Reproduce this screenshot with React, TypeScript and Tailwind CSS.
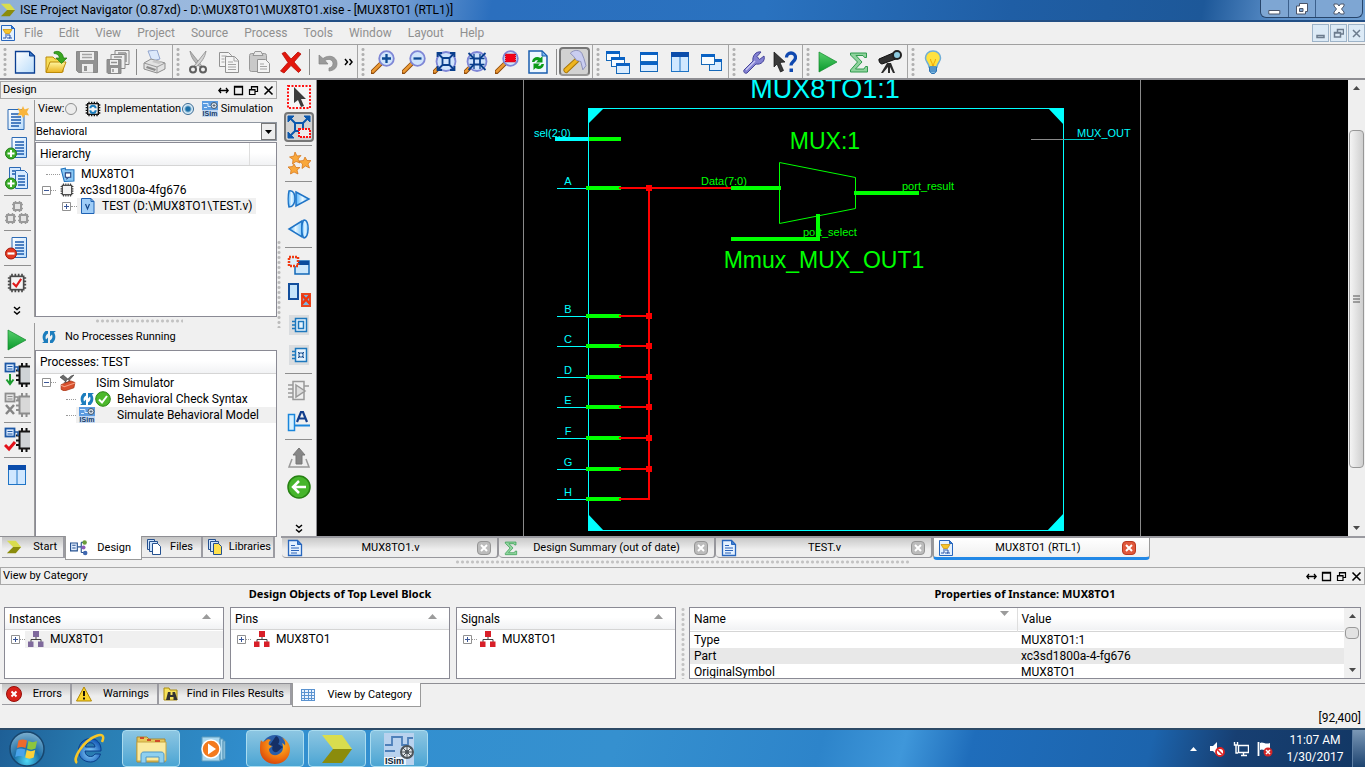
import { useState, type ReactNode } from "react";

const UI = "font-['Roboto','Liberation_Sans',sans-serif]";

/* ---------- drawing helpers ---------- */

function Svg({ s = 24, w, h, vb, children }: { s?: number; w?: number; h?: number; vb?: string; children: ReactNode }) {
  return (
    <svg width={w ?? s} height={h ?? s} viewBox={vb ?? "0 0 24 24"} fill="none" aria-hidden="true" className="block shrink-0">
      {children}
    </svg>
  );
}

function Defs() {
  return (
    <svg width="0" height="0" className="absolute" aria-hidden="true">
      <defs>
        <linearGradient id="gPage" x1="0" y1="0" x2="1" y2="1">
          <stop offset="0" stopColor="#ffffff" />
          <stop offset="1" stopColor="#b9dcfb" />
        </linearGradient>
        <linearGradient id="gGreen" x1="0" y1="0" x2="0" y2="1">
          <stop offset="0" stopColor="#57cf6c" />
          <stop offset="1" stopColor="#0a9a2c" />
        </linearGradient>
        <linearGradient id="gBlue" x1="0" y1="0" x2="1" y2="0">
          <stop offset="0" stopColor="#4fb4ff" />
          <stop offset="0.5" stopColor="#e8f7ff" />
          <stop offset="1" stopColor="#7cc8ff" />
        </linearGradient>
        <linearGradient id="gFolder" x1="0" y1="0" x2="0" y2="1">
          <stop offset="0" stopColor="#fff6a0" />
          <stop offset="1" stopColor="#eab320" />
        </linearGradient>
        <radialGradient id="gOrb" cx="0.5" cy="0.85" r="0.85">
          <stop offset="0" stopColor="#4fd8f4" />
          <stop offset="0.45" stopColor="#1b6fa8" />
          <stop offset="1" stopColor="#7fb0cf" />
        </radialGradient>
        <radialGradient id="gIe" cx="0.5" cy="0.6" r="0.6">
          <stop offset="0" stopColor="#8fd8ff" />
          <stop offset="1" stopColor="#0f55b4" />
        </radialGradient>
        <radialGradient id="gFox" cx="0.6" cy="0.3" r="0.8">
          <stop offset="0" stopColor="#ffc629" />
          <stop offset="0.6" stopColor="#f0720f" />
          <stop offset="1" stopColor="#cf3a0a" />
        </radialGradient>
      </defs>
    </svg>
  );
}

const Chevron = ({ s = 18 }: { s?: number }) => (
  <Svg s={s} vb="0 0 18 18">
    <path d="M1 2h10l6 7H8z" fill="#d9dd4e" />
    <path d="M8 9h9l-6 7H1z" fill="#8b8c0c" />
  </Svg>
);

const NewFile = () => (
  <Svg>
    <path d="M2.500 1.500h14L21.500 6v17h-19z" fill="url(#gPage)" stroke="#0b3f92" strokeWidth="1.300" />
    <path d="M16.500 1.500V6h5z" fill="#3a79c8" stroke="#0b3f92" />
  </Svg>
);

const OpenFolder = () => (
  <Svg>
    <path d="M2 7h7l2 2h8v13H2z" fill="#f6dc56" stroke="#bb8a0a" />
    <path d="M2 22.500 6 12h16l-4 10.500z" fill="url(#gFolder)" stroke="#bb8a0a" />
    <path d="M10 2c5-2 9 1 9.500 6H23l-5.500 5.500L12 8h3.500C15 5 13 3.500 10 3.500z" fill="#3aa621" stroke="#1f7a0e" strokeWidth=".7" />
  </Svg>
);

const Save = () => (
  <Svg>
    <path d="M1.500 1.500h21v21h-19l-2-2z" fill="#929292" stroke="#888" />
    <path d="M5 2h14v8H5z" fill="#f0f0f0" />
    <path d="M7 4.500h10M7 7.500h10" stroke="#a5a5a5" strokeWidth="1.500" />
    <path d="M7 14h11v8.500H7z" fill="#ededed" />
    <path d="M9 16h3v5H9z" fill="#929292" />
  </Svg>
);

const SaveAll = () => (
  <Svg>
    <g stroke="#888">
      <path d="M9 .5h14v14H9z" fill="#eee" />
      <path d="M5 4.500h14v14H5z" fill="#eee" />
      <path d="M1 9.500h14v14H2l-1-1z" fill="#929292" />
    </g>
    <path d="M4 10h8v5H4zM5 18h7v5H5z" fill="#efefef" />
    <path d="M5 12.500h6M7 19v3M12 3h8M20 3v9M8 7h8" stroke="#929292" strokeWidth="1.500" />
  </Svg>
);

const Printer = () => (
  <Svg>
    <path d="m5 1 9-1 3 9-8 2z" fill="#dbe8fb" stroke="#7f95c4" strokeWidth=".8" />
    <path d="M1 13 8 9l14 4v6l-8 4L1 19z" fill="#e2e2e2" stroke="#8d8d8d" />
    <path d="m1 13 13 4 8-4M14 17v6" stroke="#999" />
    <path d="m3 18 9 3 1-2-9-3z" fill="#8c8c8c" />
    <path d="m9 12 7 2 4-2-8-2z" fill="#c6c6c6" />
  </Svg>
);

const Cut = () => (
  <Svg>
    <path d="M4 1c1 6 4 11 10 16l1.500-1.500z" fill="#b9b9b9" stroke="#8a8a8a" strokeWidth=".8" />
    <path d="M20 1c-1 6-4 11-10 16l-1.500-1.500z" fill="#d5d5d5" stroke="#8a8a8a" strokeWidth=".8" />
    <circle cx="7" cy="19.500" r="3" stroke="#5f5f5f" strokeWidth="2" />
    <circle cx="17" cy="19.500" r="3" stroke="#5f5f5f" strokeWidth="2" />
  </Svg>
);

const Copy = () => (
  <Svg>
    <path d="M2.500 2.500h9l3 3v11h-12z" fill="#f4f4f4" stroke="#929292" />
    <path d="M8.500 6.500h9l4 4v12h-13z" fill="#f4f4f4" stroke="#929292" />
    <path d="M17 7v4h4M11 12h5M11 14.500h8M11 17h8M11 19.500h8M4.500 6h5M4.500 9h3M4.500 12h3" stroke="#a4a4a4" />
  </Svg>
);

const Paste = () => (
  <Svg>
    <rect x="1.500" y="3.500" width="17" height="18" rx="2" fill="#c9c9c9" stroke="#999" />
    <path d="M5 5.500 7 1.500h6l2 4z" fill="#e9e9e9" stroke="#999" />
    <path d="M9.500 9.500h8l4 4v9h-12z" fill="#f4f4f4" stroke="#929292" />
    <path d="M12 14h4M12 16.500h7M12 19h7" stroke="#a4a4a4" />
  </Svg>
);

const DeleteX = () => (
  <Svg>
    <path d="M3 3.500 6 2l6 7 7-7 3 2-7 8 7 8-2.500 2.500-7.500-7-7 7.500-3.500-2L9 12.500z" fill="#e3170d" stroke="#b80c05" strokeWidth=".8" />
  </Svg>
);

const Undo = () => (
  <Svg>
    <path d="M3 5v9h9l-3-3.500c4-2.500 8-.5 8 3 0 2.500-1.500 4-4 4.500v3c5-.5 8-3 8-7.500 0-7-8-9.500-14-5z" fill="#9a9a9a" stroke="#858585" strokeWidth=".7" />
  </Svg>
);

function Lens({ kind }: { kind: "in" | "out" | "fit" | "full" | "area" }) {
  const wide = kind === "fit" || kind === "full";
  return (
    <Svg>
      <path d="m1.500 22 8-8" stroke="#8f4a0a" strokeWidth="4.500" strokeLinecap="round" />
      <path d="m1.800 21.500 7.500-7.500" stroke="#eb9a35" strokeWidth="2.500" strokeLinecap="round" />
      {wide ? <circle cx="13" cy="11.500" r="9.500" fill="#cfe3fb" stroke="#7e86d6" strokeWidth="1.800" /> : <circle cx="15.500" cy="8.500" r="7.300" fill="#cfe3fb" stroke="#7e86d6" strokeWidth="1.800" />}
      {kind === "in" && <path d="M15.500 4v9M11 8.500h9" stroke="#0d4a94" strokeWidth="2.300" />}
      {kind === "out" && <path d="M11.500 8.500h8" stroke="#0d4a94" strokeWidth="2.300" />}
      {kind === "area" && <path d="M10.500 4h10v8h-10z" fill="#f40018" stroke="#c70010" strokeDasharray="1 1" />}
      {kind === "fit" && (
        <g stroke="#0a3f8c" strokeWidth="1.800">
          <path d="M9.500 8h7v7h-7zM9.500 8 5 3.500M16.500 8 21 3.500M9.500 15 5 19.500M16.500 15l4.500 4.500" />
          <path d="M4.500 7V3H9M17 3h4.500v4M4.500 16v4H9M17 20h4.500v-4" />
        </g>
      )}
      {kind === "full" && (
        <g stroke="#0a3f8c" strokeWidth="1.800">
          <path d="M10 8.500h6v6h-6zM4.500 3l5 5M21.500 3l-5 5M4.500 20l5-5M21.500 20l-5-5" />
          <path d="M10 4v4.500H5.500M16 4v4.500h4.500M10 19v-4.500H5.500M16 19v-4.500h4.500" strokeWidth="1.300" />
        </g>
      )}
    </Svg>
  );
}

const RefreshPage = () => (
  <Svg>
    <path d="M3 1h13l5 5v17H3z" fill="#eef7ff" stroke="#1a5eae" strokeWidth="1.500" />
    <path d="M16 1v5h5z" fill="#76b5f0" stroke="#1a5eae" />
    <path d="M6 12c.5-5 5.500-6 8.500-4L16.500 6v6.500H10L12 10.500c-1.500-.8-3-.3-3.500 1.500zM18 14c-.5 5-5.500 6-8.500 4L7.500 20v-6.500H14L12 15.500c1.500.8 3 .3 3.500-1.500z" fill="#0b9b18" />
  </Svg>
);

const Hammer = () => (
  <Svg s={25}>
    <path d="m2 19 11-10 3 3L5 22.500c-2 1-4-1.500-3-3.500z" fill="#eeb51f" stroke="#a87709" />
    <path d="M8 4c4-4 9-3 11 0l2 5 2 7-3 4-2-8-4-1-3-4z" fill="#c9cdf0" stroke="#8286b3" strokeWidth=".8" />
  </Svg>
);

function Win({ x, y, w, h, light }: { x: number; y: number; w: number; h: number; light?: boolean }) {
  return (
    <g>
      <rect x={x + 0.5} y={y + 0.5} width={w - 1} height={h - 1} fill={light ? "#d9ecff" : "#f8fcff"} stroke="#1668b8" />
      <rect x={x} y={y} width={w} height="3" fill="#0a62c4" />
    </g>
  );
}
const Cascade = () => (
  <Svg>
    <Win x={0} y={1} w={14} h={10} />
    <Win x={5} y={7} w={14} h={10} />
    <Win x={10} y={13} w={14} h={11} light />
  </Svg>
);
const TileH = () => (
  <Svg>
    <Win x={3} y={2} w={18} h={10} />
    <Win x={3} y={12} w={18} h={10} light />
  </Svg>
);
const TileV = ({ s = 24 }: { s?: number }) => (
  <Svg s={s}>
    <rect x="3.500" y="2.500" width="17" height="19" fill="#cfe7ff" stroke="#1f74c6" />
    <path d="M3 2h18v5H3z" fill="#0a4cab" />
    <path d="M12 7v15" stroke="#1f74c6" />
  </Svg>
);
const Layers = () => (
  <Svg>
    <Win x={10} y={9} w={13} h={12} light />
    <Win x={2} y={4} w={14} h={11} />
  </Svg>
);
const Wrench = () => (
  <Svg>
    <path d="M2 20 11 11c-1-5 3-10 8-9l-4 4.500 2.500 3L22 6c1.500 5-3 9-8 8l-9 9c-2 1-4-1-3-3z" fill="#8482d2" stroke="#45449a" />
    <path d="m4 20 9-9" stroke="#c9c8f3" strokeWidth="1.500" />
  </Svg>
);
const HelpArrow = () => (
  <Svg>
    <path d="m1 2 11 10-5 .5 3.500 8-3 1.500L4 14l-3 3z" fill="#3a3a3a" stroke="#111" strokeWidth=".7" />
    <path d="M13.500 7.500c0-6 9-6 9 0 0 4-4.500 4-4.500 8" stroke="#1049b0" strokeWidth="3.300" />
    <path d="M16.500 18.500h3.500V22h-3.500z" fill="#1049b0" />
  </Svg>
);
const Play = () => (
  <Svg>
    <path d="m3 2 18 10L3 22z" fill="url(#gGreen)" stroke="#138a2c" strokeWidth=".7" />
  </Svg>
);
const Sigma = ({ s = 24 }: { s?: number }) => (
  <Svg s={s}>
    <path d="M3.500 3h16v4.500h-2L16 5.500H9l6 6.500-6.500 7H17l1.500-2.500h2V22H3.500v-2l7-8-7-7z" fill="#8fd39d" stroke="#2f9a4c" />
  </Svg>
);
const Telescope = () => (
  <Svg>
    <path d="m1 9 14-6 3 6-14 5c-2 0-3.500-3-3-5z" fill="#303030" stroke="#111" />
    <circle cx="19" cy="5" r="4" fill="#8ecbe0" stroke="#222" strokeWidth="2" />
    <path d="M9 13h4l4 10h-2l-3-6v6h-2v-6l-5 6H3z" fill="#2b2b2b" />
  </Svg>
);
const Bulb = () => (
  <Svg>
    <path d="M12 1c5 0 7.500 3.500 7.500 7 0 4-3.500 5-3.500 9H8c0-4-3.500-5-3.500-9C4.500 4.500 7 1 12 1z" fill="#ffe23f" stroke="#6eaed8" strokeWidth="1.500" />
    <path d="M9.500 9c0 3 2 3 2 7M14.500 9c0 3-2 3-2 7" stroke="#f2a400" />
    <path d="M8.500 17h7v4l-2 2.500h-3l-2-2.500z" fill="#7fb9e0" stroke="#2b73b5" />
    <path d="M8.500 19h7M8.500 21h7" stroke="#2b73b5" />
  </Svg>
);

/* source file page with optional badge */
function Doc({ s = 24, badge }: { s?: number; badge?: "add" | "del" | "star" | "dup" }) {
  return (
    <Svg s={s}>
      {badge === "dup" && (
        <g>
          <path d="M4.500 1.500h11v16h-11z" fill="#d6eaff" stroke="#2c6ab4" />
          <path d="M10.500 4.500h9l3 3v15h-12z" fill="#d6eaff" stroke="#2c6ab4" />
          <path d="M13 10h7M13 13h7M13 16h7M13 19h7M7 5h3M7 8h3" stroke="#1d5cae" strokeWidth="1.500" />
        </g>
      )}
      {badge !== "dup" && (
        <g>
          <path d={badge === "star" ? "M3 3.500h16v20H3z" : "M7 1.500h14.500v20H7z"} fill="url(#gPage)" stroke="#2c6ab4" />
          <path d={badge === "star" ? "M6 8h9M6 11h10M6 14h10M6 17h10M6 20h8" : "M10 6h9M10 9h9M10 12h9M10 15h9M10 18h9"} stroke="#1d5cae" strokeWidth="1.500" />
        </g>
      )}
      {badge === "star" && <path d="m18 0 1.500 3.500L24 2l-2 4 2 3.500-4-.5-2 3-1.500-3-4 .5 2-3.500-2-4 4 1.500z" fill="#f9b53b" />}
      {(badge === "add" || badge === "dup") && (
        <g>
          <circle cx="6" cy="17.500" r="5.500" fill="#3dae2b" stroke="#1e7b14" />
          <path d="M6 14v7M2.500 17.500h7" stroke="#fff" strokeWidth="2" />
        </g>
      )}
      {badge === "del" && (
        <g>
          <circle cx="6" cy="17.500" r="5.500" fill="#e23a22" stroke="#a3170c" />
          <path d="M2.500 17.500h7" stroke="#fff" strokeWidth="2.200" />
        </g>
      )}
    </Svg>
  );
}
const PageText = () => (
  <Svg s={18} vb="0 0 18 18">
    <path d="M2.500 1.500h9l4 4v11h-13z" fill="#e4f1ff" stroke="#2766bd" strokeWidth="1.300" />
    <path d="M11.500 1.500v4h4z" fill="#3f7fd3" stroke="#2766bd" />
    <path d="M5 6.500h4M5 9h8M5 11.500h8M5 14h6" stroke="#2a62b8" />
  </Svg>
);
const Schematic = ({ s = 16 }: { s?: number }) => (
  <Svg s={s} vb="0 0 16 16">
    <path d="M1.500.5h10l3 3v12h-13z" fill="#e4f1ff" stroke="#2766bd" />
    <path d="M11.500.5v3h3z" fill="#3f7fd3" stroke="#2766bd" />
    <path d="M3 4.500h9l-2.500 4h-4z" fill="#f7c52b" stroke="#c48900" strokeWidth=".7" />
    <path d="M3 13h3v-2M12 13h-3M5 10h5v3H7" stroke="#2a55a8" />
  </Svg>
);
function Chip({ s = 24, c = "#333", children }: { s?: number; c?: string; children?: ReactNode }) {
  return (
    <Svg s={s}>
      <path d="M1 6h22M1 10h22M1 14h22M1 18h22M6 1v22M10 1v22M14 1v22M18 1v22" stroke={c} strokeWidth="2" />
      <rect x="4" y="4" width="16" height="16" fill="#f4f4f4" stroke={c} strokeWidth="2" />
      {children}
    </Svg>
  );
}
const ChipTrio = () => (
  <Svg>
    {["8,1", "1,13", "14,13"].map((p) => {
      const [x, y] = p.split(",").map(Number);
      return (
        <g key={p} stroke="#9a9a9a">
          <path d={`M${x - 1} ${y + 2.500}h11M${x - 1} ${y + 6.500}h11M${x + 2.500} ${y - 1}v11M${x + 6.500} ${y - 1}v11`} strokeWidth="1.500" />
          <rect x={x + 1} y={y + 1} width="7" height="7" fill="#e4e4e4" strokeWidth="2" />
        </g>
      );
    })}
  </Svg>
);
function Synth({ mark }: { mark: "down" | "x" | "check" }) {
  const grey = mark === "x";
  return (
    <Svg s={26} vb="0 0 26 26">
      <path d="M15.500 4.500H27v17H15.500zM12 8.500h4M12 13.500h4M12 18h4M18 1v4M22.500 1v4M18 21v4M22.500 21v4" fill={grey ? "#d8d8d8" : "#cfd3d6"} stroke={grey ? "#8d8d8d" : "#151515"} strokeWidth="2" />
      <path d="M11 5h3v4" stroke={grey ? "#8d8d8d" : "#1c57a5"} strokeWidth="1.500" />
      <rect x="1.500" y="1.500" width="9" height="8" fill={grey ? "#e4e4e4" : "#d9eaff"} stroke={grey ? "#8d8d8d" : "#1c57a5"} strokeWidth="1.800" />
      <path d="M3.500 4.500h5M3.500 7h5" stroke={grey ? "#8d8d8d" : "#1c57a5"} />
      {mark === "down" && <path d="M6 12v9M2.500 17.500 6 22l3.500-4.500" stroke="#1b9b2e" strokeWidth="2" />}
      {mark === "x" && <path d="m2 13 8 9M10 13l-8 9" stroke="#858585" strokeWidth="2.500" />}
      {mark === "check" && <path d="m1 18 4 4 6-7" stroke="#e3121a" strokeWidth="3" />}
    </Svg>
  );
}
const Cycle = ({ s = 16 }: { s?: number }) => (
  <Svg s={s} vb="0 0 16 16">
    <path d="M7 2H4.500C1 5 1 9.500 3 12.500L1 14h6V8.500L5 10.500C4 8.500 4.500 6 7 4.500zM9 14h2.500c3.500-3 3.500-7.500 1.500-10.500L15 2H9v5.500l2-2c1 2 .5 4.500-2 6z" fill="#1c7dbd" />
  </Svg>
);
const ISim = ({ s = 16 }: { s?: number }) => (
  <Svg s={s} vb="0 0 16 16">
    <rect width="16" height="16" fill="#5b9be0" />
    <path d="M1 2.500h5v3h3M2 6.500h3" stroke="#d9ecff" />
    <circle cx="12" cy="4.500" r="3" fill="#dfe6ee" stroke="#43566b" />
    <path d="M12 3v3M10.500 4.500h3" stroke="#43566b" strokeWidth=".8" />
    <path d="M0 9h16v7H0z" fill="#c4d9f3" />
    <text x="8" y="15" fontSize="7" fontWeight="700" fontFamily="Liberation Sans, sans-serif" textAnchor="middle" fill="#173a66">ISim</text>
  </Svg>
);
const ToolBox = () => (
  <Svg s={17} vb="0 0 16 16">
    <path d="m1 3 3-2 9 8-1.500 2zM14 1l-3 1-6 6 1.500 1.500z" fill="#6c6c6c" stroke="#3c3c3c" strokeWidth=".6" />
    <path d="M2 10 11 6.500l4 1.500-1 5-9 3-3-1.500z" fill="#d9502d" stroke="#a3300f" strokeWidth=".7" />
    <path d="m2 10.500 3 1.500 10-3.500" stroke="#f4a184" />
  </Svg>
);
const OkBadge = () => (
  <Svg s={16} vb="0 0 16 16">
    <circle cx="8" cy="8" r="7.300" fill="#4cb82c" stroke="#2c8516" />
    <path d="m4 8.500 3 3 5-6.500" stroke="#fff" strokeWidth="2" />
  </Svg>
);
const ProjectIcon = () => (
  <Svg s={15} vb="0 0 14 14">
    <path d="m1 2 4-1v1.500h8v10.500l-9 .5z" fill="#8cc8f4" stroke="#2073bd" />
    <path d="M5 5.500h5v4H8L6.500 11V9.500H5z" fill="#fff" stroke="#24417f" />
  </Svg>
);
const VerilogIcon = () => (
  <Svg s={16} vb="0 0 16 16">
    <path d="M1.500.5H11l3 3v12H1.500z" fill="#9fcdf7" stroke="#1e62b4" />
    <path d="M11 .5v3h3" stroke="#1e62b4" />
    <path d="M5.500 6 7.500 11l2-5" stroke="#164789" strokeWidth="1.200" />
  </Svg>
);
function Blocks({ c }: { c: string }) {
  return (
    <Svg s={16} vb="0 0 16 16">
      <path d="M8 5v4M3 11V8.500h10V11" stroke="#444" />
      <path d="M5 0h6v6H5zM0 10.500h5.500V16H0zM10 10.500h5.500V16H10z" fill={c} />
    </Svg>
  );
}

/* ---------- generic controls ---------- */

function ToolButton({ label, pressed, children }: { label: string; pressed?: boolean; children: ReactNode }) {
  return (
    <button
      type="button"
      aria-label={label}
      title={label}
      className={`flex h-[29px] w-[31px] shrink-0 items-center justify-center ${pressed ? "rounded-sm border-2 border-[#777] border-b-[#999] bg-[#d2d2d2]" : ""}`}
    >
      {children}
    </button>
  );
}
const SepBox = () => (
  <span className="flex w-1.5 shrink-0 justify-center">
    <span className="h-[26px] w-px bg-[#8b8b8b]" />
  </span>
);
const HSep = () => <span className="my-[2px] h-px w-[27px] shrink-0 bg-[#8f8f8f]" />;

function Group({ children, last }: { children: ReactNode; last?: boolean }) {
  return (
    <div className={`flex h-full items-center ${last ? "" : "border-r border-[#a5a5a5] pr-0.5"}`}>
      <span className="mr-0.5 ml-[3px] h-[29px] w-1 shrink-0 bg-[radial-gradient(circle,#b0b0b0_1px,transparent_2px)] bg-[length:4px_5px]" />
      {children}
    </div>
  );
}
const DoubleChevron = ({ down }: { down?: boolean }) => (
  <Svg s={10} vb="0 0 10 10">
    <path d={down ? "m2 1 3 2.500L8 1M2 5.500 5 8l3-2.500" : "m1 2 2.500 3L1 8M5.500 2 8 5 5.500 8"} stroke="#000" strokeWidth="1.500" />
  </Svg>
);

function DockButtons() {
  const items: [string, ReactNode][] = [
    ["Slide", <path key="a" d="M1 5.500h9M3 3 .8 5.500 3 8M8 3l2.200 2.500L8 8" stroke="#000" strokeWidth="1.300" />],
    ["Maximize", <path key="b" d="M1.500 1.500h8v8h-8zM1 2h9" stroke="#000" strokeWidth="1.300" />],
    ["Float", <path key="c" d="M3.500 4V1.500h6v5H7M1.500 4.500h5.500v5H1.500zM3 2h6.500M1 5h6" stroke="#000" strokeWidth="1.200" />],
    ["Close", <path key="d" d="m1.500 1.500 8 8M9.500 1.500l-8 8" stroke="#000" strokeWidth="1.600" />],
  ];
  return (
    <div className="flex gap-1">
      {items.map(([label, d]) => (
        <button key={label} type="button" aria-label={label} className="flex h-4 w-[11px] items-center justify-center">
          <Svg s={11} vb="0 0 11 11">{d}</Svg>
        </button>
      ))}
    </div>
  );
}

function Expander({ open }: { open?: boolean }) {
  return (
    <button type="button" aria-label={open ? "Collapse" : "Expand"} className="block shrink-0">
      <Svg s={9} vb="0 0 9 9">
        <path d="M.5.500h8v8h-8z" fill="#fff" stroke="#919191" />
        <path d={open ? "M2 4.500h5" : "M2 4.500h5M4.500 2v5"} stroke="#3b5797" />
      </Svg>
    </button>
  );
}
const Dots = ({ className }: { className: string }) => <span className={`shrink-0 border-t border-dotted border-[#9a9a9a] ${className}`} />;

/* ---------- window chrome ---------- */

function TitleBar() {
  return (
    <header className="flex h-[22px] items-start justify-between border-b-2 border-[#234f85] bg-[linear-gradient(100deg,#8fb0d6_0%,#9dbbe0_18%,#7fa5d6_28%,#2b6fbe_36%,#2a72bf_56%,#1f5ea5_74%,#1d5899_88%,#5f92cb_94%,#6f9fd2_100%)]">
      <div className="flex h-full items-center gap-1">
        <Chevron s={16} />
        <h1 className="text-[12px] leading-5 text-black">ISE Project Navigator (O.87xd) - D:\MUX8TO1\MUX8TO1.xise - [MUX8TO1 (RTL1)]</h1>
      </div>
      <div className="mr-0.5 flex h-[18px] rounded-b-md border border-t-0 border-[#27456b] bg-[#7ea6d3]">
        <button type="button" aria-label="Minimize" className="flex w-7 items-center justify-center border-r border-[#3c608c]">
          <Svg w={13} h={14} vb="0 0 13 14"><path d="M.8 8.500h11v3.500H.8z" fill="#fff" stroke="#4a5468" /></Svg>
        </button>
        <button type="button" aria-label="Restore" className="flex w-[27px] items-center justify-center border-r border-[#3c608c]">
          <Svg s={14} vb="0 0 14 14"><path d="M4.500 1.500h8v8h-2v2.500h-9V4h3z" fill="#fff" stroke="#4a5468" /><path d="M4.500 6.500h3.500V9.500H4.500z" fill="#7ea6d3" stroke="#4a5468" /></Svg>
        </button>
        <button type="button" aria-label="Close" className="flex w-[46px] items-center justify-center">
          <Svg s={12} vb="0 0 12 12"><path d="M1 1h3.500L6 3l1.500-2H11v2L8.500 6 11 9v2H7.500L6 9l-1.500 2H1V9l2.500-3L1 3z" fill="#fff" stroke="#4a5468" /></Svg>
        </button>
      </div>
    </header>
  );
}

function MenuBar() {
  const menus = ["File", "Edit", "View", "Project", "Source", "Process", "Tools", "Window", "Layout", "Help"];
  const mdi: [string, string][] = [
    ["Minimize document", "M2 7.500h7v2H2z"],
    ["Restore document", "M4.500 4V1.500h6v4.500H8M1.500 4.500h6v4.500h-6zM2 5h5"],
    ["Close document", "m2 2 7 7M9 2 2 9"],
  ];
  return (
    <nav className="flex h-[23px] items-center border-b border-[#a0a0a0] text-[12px] text-[#8f8f8f]" aria-label="Main menu">
      <span className="flex w-4 justify-center"><Schematic s={16} /></span>
      <ul className="flex flex-1">
        {menus.map((m) => (
          <li key={m}>
            <button type="button" className="px-2">{m}</button>
          </li>
        ))}
      </ul>
      <div className="flex gap-px">
        {mdi.map(([label, d]) => (
          <button key={label} type="button" aria-label={label} className="flex h-[18px] w-[17px] items-center justify-center border border-[#9db3c8] bg-[#dceaf6]">
            <Svg s={11} vb="0 0 11 11"><path d={d} stroke="#6c7c8e" strokeWidth="1.500" /></Svg>
          </button>
        ))}
      </div>
    </nav>
  );
}

function MainToolbar() {
  return (
    <div role="toolbar" aria-label="Main toolbar" className="flex h-[35px] items-center border-b-2 border-[#8e8e93]">
      <Group>
        <ToolButton label="New"><NewFile /></ToolButton>
        <ToolButton label="Open"><OpenFolder /></ToolButton>
        <ToolButton label="Save"><Save /></ToolButton>
        <ToolButton label="Save All"><SaveAll /></ToolButton>
        <SepBox />
        <ToolButton label="Print"><Printer /></ToolButton>
      </Group>
      <Group>
        <ToolButton label="Cut"><Cut /></ToolButton>
        <ToolButton label="Copy"><Copy /></ToolButton>
        <ToolButton label="Paste"><Paste /></ToolButton>
        <ToolButton label="Delete"><DeleteX /></ToolButton>
        <SepBox />
        <ToolButton label="Undo"><Undo /></ToolButton>
        <button type="button" aria-label="More" className="flex w-3 justify-center"><DoubleChevron /></button>
      </Group>
      <Group>
        <ToolButton label="Zoom In"><Lens kind="in" /></ToolButton>
        <ToolButton label="Zoom Out"><Lens kind="out" /></ToolButton>
        <ToolButton label="Zoom Full"><Lens kind="fit" /></ToolButton>
        <ToolButton label="Zoom Fit"><Lens kind="full" /></ToolButton>
        <ToolButton label="Zoom Area"><Lens kind="area" /></ToolButton>
        <ToolButton label="Refresh"><RefreshPage /></ToolButton>
        <SepBox />
        <ToolButton label="Build" pressed><Hammer /></ToolButton>
      </Group>
      <Group>
        <ToolButton label="Cascade"><Cascade /></ToolButton>
        <ToolButton label="Tile Horizontally"><TileH /></ToolButton>
        <ToolButton label="Tile Vertically"><TileV /></ToolButton>
        <ToolButton label="Float"><Layers /></ToolButton>
      </Group>
      <Group>
        <ToolButton label="Preferences"><Wrench /></ToolButton>
        <ToolButton label="What is this"><HelpArrow /></ToolButton>
      </Group>
      <Group>
        <ToolButton label="Run"><Play /></ToolButton>
        <ToolButton label="Summary"><Sigma /></ToolButton>
        <ToolButton label="Analyze"><Telescope /></ToolButton>
      </Group>
      <Group last>
        <ToolButton label="Tips"><Bulb /></ToolButton>
      </Group>
    </div>
  );
}

/* ---------- left dock ---------- */

function SideButton({ label, children, pressed }: { label: string; children: ReactNode; pressed?: boolean }) {
  return (
    <button type="button" aria-label={label} title={label} className={`flex h-[30px] w-[30px] shrink-0 items-center justify-center ${pressed ? "rounded border-2 border-[#777] bg-[#d2d2d2]" : ""}`}>
      {children}
    </button>
  );
}

function Radio({ id, label, checked, onChange, icon }: { id: string; label: string; checked: boolean; onChange: () => void; icon: ReactNode }) {
  return (
    <div className="flex items-center">
      <input
        id={id}
        type="radio"
        name="view"
        checked={checked}
        onChange={onChange}
        className="mr-2 h-3 w-3 shrink-0 appearance-none rounded-full border border-[#8e8f8f] bg-[#ececec] checked:border-[#3c6c94] checked:bg-[radial-gradient(circle,#1c70a8_2px,#d8ecf8_4px)]"
      />
      {icon}
      <label htmlFor={id} className="ml-[3px]">{label}</label>
    </div>
  );
}

function DesignPanel() {
  const [view, setView] = useState("sim");
  return (
    <div className="flex flex-1 flex-col">
      <div className="mt-px flex h-[18px] items-center justify-between border border-[#a9a9a9] pr-0.5 pl-0.5">
        <h2>Design</h2>
        <DockButtons />
      </div>
      <div className="mt-px flex h-[217px]">
        <div role="toolbar" aria-label="Source actions" className="flex w-[35px] shrink-0 flex-col items-center border-r border-[#9b9b9b] pt-[3px]">
          <SideButton label="New Source"><Doc badge="star" /></SideButton>
          <SideButton label="Add Source"><Doc badge="add" /></SideButton>
          <SideButton label="Add Copy of Source"><Doc badge="dup" /></SideButton>
          <HSep />
          <SideButton label="Manual Compile Order"><ChipTrio /></SideButton>
          <HSep />
          <SideButton label="Remove Source"><Doc badge="del" /></SideButton>
          <HSep />
          <SideButton label="Design Goals">
            <Chip s={20} c="#4a4a4a"><path d="m7 12 4 4 6-9" stroke="#e01a1a" strokeWidth="2.500" /></Chip>
          </SideButton>
          <button type="button" aria-label="More" className="mt-2"><DoubleChevron down /></button>
        </div>
        <div className="flex min-w-0 flex-1 flex-col">
          <fieldset className="flex h-[22px] min-w-0 items-center justify-between pt-px pr-1 pl-[3px]">
            <span>View:</span>
            <Radio id="v-impl" label="Implementation" checked={view === "impl"} onChange={() => setView("impl")} icon={<Chip s={16} c="#111"><path d="M8 11a4 4 0 0 1 8 0M16 14a4 4 0 0 1-8 0" stroke="#1c7dbd" strokeWidth="3" /></Chip>} />
            <Radio id="v-sim" label="Simulation" checked={view === "sim"} onChange={() => setView("sim")} icon={<ISim />} />
          </fieldset>
          <div className="flex h-[19px] border border-[#8f96a0] bg-white">
            <select aria-label="Simulation stage" className="min-w-0 flex-1 appearance-none bg-white" defaultValue="Behavioral">
              <option>Behavioral</option>
              <option>Post-Route</option>
            </select>
            <span aria-hidden="true" className="flex w-[15px] items-center justify-center border border-[#777] bg-[#ededed]">
              <Svg w={7} h={4} vb="0 0 7 4"><path d="M0 0h7L3.500 4z" fill="#000" /></Svg>
            </span>
          </div>
          <div className="mt-px flex flex-1 flex-col border border-[#8a8a94] bg-white">
            <div className="flex h-[23px] border-b border-[#d5d5d5] bg-linear-to-b from-white from-45% to-[#f1f2f4] text-[12px]">
              <span className="flex-1 border-r border-[#dedede] pl-1 leading-[23px]">Hierarchy</span>
              <span className="w-[26px]" />
            </div>
            <ul role="tree" aria-label="Hierarchy" className="text-[12px] leading-4">
              <li role="treeitem" className="flex h-4 items-center pl-2.5">
                <Dots className="w-[14px]" />
                <ProjectIcon />
                <span className="ml-1.5">MUX8TO1</span>
              </li>
              <li role="treeitem" aria-expanded="true">
                <div className="flex h-4 items-center pl-1.5">
                  <Expander open />
                  <Dots className="mr-1 w-[5px]" />
                  <Chip s={14} c="#444" />
                  <span className="ml-1.5">xc3sd1800a-4fg676</span>
                </div>
                <ul role="group">
                  <li role="treeitem" className="flex h-4 items-center pl-[26px]">
                    <Expander />
                    <Dots className="w-1.5" />
                    <span className="flex h-4 items-center bg-[#f0f0f0] pr-1 pl-[3px]">
                      <VerilogIcon />
                      <span className="ml-1.5">TEST (D:\MUX8TO1\TEST.v)</span>
                    </span>
                  </li>
                </ul>
              </li>
            </ul>
          </div>
        </div>
      </div>
      <div className="flex h-[6px] justify-center">
        <span className="mt-0.5 h-1 w-[88px] bg-[radial-gradient(circle,#c2c2c2_1px,transparent_2px)] bg-[length:5px_4px]" />
      </div>
      <div className="flex flex-1">
        <div role="toolbar" aria-label="Process actions" className="flex w-[35px] shrink-0 flex-col items-center border-r border-[#9b9b9b] pt-0.5">
          <SideButton label="Run"><Play /></SideButton>
          <HSep />
          <SideButton label="Rerun"><Synth mark="down" /></SideButton>
          <SideButton label="Stop"><Synth mark="x" /></SideButton>
          <HSep />
          <SideButton label="Check"><Synth mark="check" /></SideButton>
          <HSep />
          <SideButton label="Columns"><TileV /></SideButton>
        </div>
        <div className="flex min-w-0 flex-1 flex-col">
          <p className="flex h-[27px] items-center gap-2 pl-1.5">
            <Cycle />
            No Processes Running
          </p>
          <div className="flex flex-1 flex-col border border-b-0 border-[#8a8a94] bg-white text-[12px]">
            <h3 className="h-[23px] border-b border-[#d5d5d5] bg-linear-to-b from-white from-45% to-[#f1f2f4] pl-1 leading-[23px]">Processes: TEST</h3>
            <ul role="tree" aria-label="Processes" className="leading-4">
              <li role="treeitem" aria-expanded="true">
                <div className="flex h-[17px] items-center pl-1.5">
                  <Expander open />
                  <Dots className="mr-[3px] w-[5px]" />
                  <ToolBox />
                  <span className="ml-5">ISim Simulator</span>
                </div>
                <ul role="group">
                  <li role="treeitem" className="flex h-4 items-center pl-[30px]">
                    <Dots className="mr-[3px] w-2.5" />
                    <Cycle />
                    <OkBadge />
                    <span className="ml-1.5">Behavioral Check Syntax</span>
                  </li>
                  <li role="treeitem" className="flex h-4 items-center pl-[30px]">
                    <Dots className="w-2.5" />
                    <span className="flex flex-1 items-center bg-[#f0f0f0] pl-[3px]">
                      <ISim />
                      <span className="ml-[22px]">Simulate Behavioral Model</span>
                    </span>
                  </li>
                </ul>
              </li>
            </ul>
          </div>
        </div>
      </div>
    </div>
  );
}

const FilesIcon = ({ c = "#cfe4fb", front = "#ffffff" }: { c?: string; front?: string }) => (
  <Svg s={16} vb="0 0 16 16">
    <g stroke="#24508f">
      <path d="M1.500.5h7v10h-7z" fill={c} />
      <path d="M3.500 2.500h8v10h-8z" fill={c} />
      <path d="M6.500 4.500h5l3 3v8h-8z" fill={front} />
    </g>
  </Svg>
);

type TabSpec = { label: string; icon: ReactNode; active?: boolean; width: string };

function TabStrip({ tabs, label }: { tabs: TabSpec[]; label: string }) {
  return (
    <div role="tablist" aria-label={label} className="flex h-6 items-start border-t border-[#8f8f94] pl-0.5">
      {tabs.map((t) => (
        <button
          key={t.label}
          type="button"
          role="tab"
          aria-selected={!!t.active}
          className={`flex items-center justify-between whitespace-nowrap pl-1 ${t.width} ${t.active ? "-mt-px h-6 border border-t-0 border-[#9a9a9a] bg-white" : "h-[21px] border-r-2 border-b border-[#9c9ca2] bg-linear-to-b from-[#c4c4c4] to-[#eeeeee] to-60%"}`}
        >
          {t.icon}
          <span>{t.label}</span>
        </button>
      ))}
    </div>
  );
}

/* ---------- schematic view ---------- */

function Pin({ y, name }: { y: number; name: string }) {
  return (
    <g>
      <path d={`M557 ${y + 0.5}h31`} stroke="#00ffff" />
      <path d={`M586 ${y}h35`} stroke="#00ff00" strokeWidth="4" />
      <path d={`M619 ${y}h31`} stroke="#ff0000" strokeWidth="2" />
      {name !== "H" && <rect x="646" y={y - 3} width="6" height="6" fill="#ff0000" />}
      <text x="568" y={y - 3} textAnchor="middle" fontSize="11" fill="#00ffff">{name}</text>
    </g>
  );
}

function SchematicCanvas() {
  const pins: [string, number][] = [["A", 188], ["B", 316], ["C", 346], ["D", 377], ["E", 407], ["F", 438], ["G", 469], ["H", 499]];
  return (
    <div className="flex min-w-0 flex-1 justify-center overflow-hidden border-l border-[#8e8e93] bg-black">
      <svg width="1031" height="456" viewBox="317 80 1031 456" className="shrink-0" role="img" aria-label="RTL schematic of MUX8TO1" fontFamily="Liberation Sans, Arial, sans-serif" fill="none">
        <path d="M523.500 80v457M1140.500 80v457" stroke="#8a8a8a" />
        <path d="M588.500 108.500h475v422h-475z" stroke="#00ffff" />
        <path d="M588 108h16l-16 16zM1048 108h16v17zM588 514v17h16zM1064 513v18h-17z" fill="#00ffff" />
        <text x="825" y="98" textAnchor="middle" fontSize="27" fill="#00ffff">MUX8TO1:1</text>
        <text x="534" y="137" fontSize="11" fill="#00ffff">sel(2:0)</text>
        <path d="M555 139h34" stroke="#00ffff" strokeWidth="4" />
        <path d="M589 139h32" stroke="#00ff00" strokeWidth="4" />
        <path d="M1031 139.500h33" stroke="#8a8a8a" />
        <path d="M1064 139.500h30" stroke="#00c8c8" />
        <text x="1077" y="137" fontSize="11" fill="#00ffff">MUX_OUT</text>
        <path d="M649 187v313" stroke="#ff0000" strokeWidth="2" />
        {pins.map(([n, y]) => (
          <Pin key={n} name={n} y={y} />
        ))}
        <path d="M650 188h83" stroke="#ff0000" strokeWidth="2" />
        <g stroke="#00ff00" strokeWidth="4">
          <path d="M731 188h50M854 193h65M731 239h89M818 214v27" />
        </g>
        <path d="m779.500 162.500 76 15v31l-76 15z" stroke="#00ff00" />
        <g fill="#00ff00">
          <text x="701" y="185" fontSize="11">Data(7:0)</text>
          <text x="902" y="190" fontSize="11">port_result</text>
          <text x="803" y="236" fontSize="11">port_select</text>
          <text x="825" y="149" textAnchor="middle" fontSize="23">MUX:1</text>
          <text x="824" y="268" textAnchor="middle" fontSize="23">Mmux_MUX_OUT1</text>
        </g>
      </svg>
    </div>
  );
}

const Arrow = ({ up }: { up?: boolean }) => (
  <Svg w={7} h={4} vb="0 0 7 4">
    <path d={up ? "M0 4h7L3.500 0z" : "M0 0h7L3.500 4z"} fill="#4a4a4a" />
  </Svg>
);

const ToolSep = () => <span className="mt-[3px] mb-[2px] h-px w-[27px] shrink-0 bg-[#8f8f8f]" />;

function RtlToolbar() {
  return (
    <div role="toolbar" aria-label="Schematic tools" className="flex w-[35px] shrink-0 flex-col items-center pt-0.5">
      <SideButton label="Select">
        <Svg s={26} vb="0 0 26 26">
          <path d="M2 2h22v22H2z" fill="#f6f6f6" stroke="#f11" strokeWidth="2" strokeDasharray="2 1.500" />
          <path d="m8 3 12 12h-5l3 7-3 1-3-7-4 3z" fill="#3b3b3b" />
        </Svg>
      </SideButton>
      <SideButton label="Area zoom" pressed>
        <Svg s={26} vb="0 0 26 26">
          <g stroke="#0c58ae" strokeWidth="2">
            <path d="M9 9h8v8H9zM9 9 3 3M17 9l6-6M9 17l-6 6" />
            <path d="M2 2h6L2 8zM18 2h6v6zM2 18v6h6z" fill="#0c58ae" strokeWidth="1" />
          </g>
          <path d="M13 15h11v8H13z" fill="#eee" stroke="#f11" strokeWidth="2" strokeDasharray="2 1" />
        </Svg>
      </SideButton>
      <ToolSep />
      <SideButton label="Favorites">
        <Svg>
          <g fill="#f9a83c" stroke="#d27013" strokeWidth=".7">
            <path d="m8 1 2 4 4-.5-3 3.500 2 4-4-1.500L5.500 13 6 8.500 2.500 6 7 5z" />
            <path d="m18 6 2 3.500h4L21 13l1.500 4-4-2-3.500 2.500.5-4.500L12 10l4.500-.5z" />
            <path d="m7 13 2 3.500h4L10 19l1 4-4-2-3.500 2 .5-4-3-3 4.500-.5z" />
          </g>
        </Svg>
      </SideButton>
      <ToolSep />
      <SideButton label="Forward cone">
        <Svg><path d="M2 4c5-1 6 4 6 8s-2 8-6 8c-1-4-1-12 0-16z" fill="url(#gBlue)" stroke="#1f74c6" strokeWidth="1.500" /><path d="m9 5 13 7-13 7z" fill="url(#gBlue)" stroke="#1f74c6" strokeWidth="1.500" /></Svg>
      </SideButton>
      <SideButton label="Backward cone">
        <Svg><path d="M15 4 2 12l13 8z" fill="url(#gBlue)" stroke="#1f74c6" strokeWidth="1.500" /><path d="M17 3c6 0 5 17 0 18-3-3-3-15 0-18z" fill="url(#gBlue)" stroke="#1f74c6" strokeWidth="1.500" /></Svg>
      </SideButton>
      <ToolSep />
      <SideButton label="Add to view">
        <Svg>
          <path d="M10 8h12v13H8v-9" fill="#cce7fb" stroke="#1268b8" strokeWidth="1.500" />
          <path d="M11 8h11v4H11z" fill="#0a4b9c" />
          <path d="M2 4h9v9H2z" fill="#dceefa" stroke="#f03a12" strokeWidth="2.500" strokeDasharray="2 1" />
        </Svg>
      </SideButton>
      <SideButton label="Remove from view">
        <Svg s={26} vb="0 0 26 26">
          <path d="M3 2h9v15H3z" fill="#c5e4fa" stroke="#124e9c" strokeWidth="2" />
          <path d="M16 12h8v12h-8z" fill="#7cb5e0" stroke="#e9471f" strokeWidth="2" />
          <path d="m16 13 8 9M24 13l-8 9" stroke="#f0350f" strokeWidth="2.500" />
        </Svg>
      </SideButton>
      {["Push into block", "Pop out of block"].map((l, i) => (
        <SideButton key={l} label={l}>
          <span className="bg-[#d9dcdf]">
            <Svg s={20} vb="0 0 20 20">
              <path d="M6.500 3.500h11v13h-11zM3 6.500h3.500M3 10h3.500M3 13.500h3.500" fill="#e6f3fd" stroke="#1c77bd" strokeWidth="1.500" />
              {i === 0 ? <path d="M9.500 6.500h5v7h-5z" stroke="#1c77bd" strokeWidth="1.500" /> : <path d="m9 7 2 2M15 7l-2 2M9 13l2-2M15 13l-2-2M10 8h4v4h-4z" stroke="#174f90" />}
            </Svg>
          </span>
        </SideButton>
      ))}
      <ToolSep />
      <SideButton label="Signal">
        <Svg><path d="M6 2.500h11v18H6zM1 6h5M1 10h5M1 14h5M1 18h5M17 7h5" stroke="#999" strokeWidth="1.500" /><path d="m9 6 9 6-9 6z" fill="#ddd" stroke="#999" strokeWidth="1.500" /></Svg>
      </SideButton>
      <SideButton label="Name">
        <Svg>
          <path d="M1.500 5.500h6v16h-6z" fill="#d7f0ff" stroke="#1a86dc" strokeWidth="1.500" />
          <path d="M8 16.500h15" stroke="#1a86dc" strokeWidth="2" />
          <path d="m10 13 4-10h2l4 10M12 9.500h6" stroke="#123e8c" strokeWidth="2.200" />
        </Svg>
      </SideButton>
      <ToolSep />
      <SideButton label="Up">
        <Svg><path d="m5 14-3 8h20l-3-8" fill="#eee" stroke="#999" strokeWidth="1.500" /><path d="m12 3 6 7h-3v9H9v-9H6z" fill="#868686" stroke="#777" /></Svg>
      </SideButton>
      <SideButton label="Back">
        <Svg><circle cx="12" cy="12" r="11" fill="#46b52b" stroke="#268112" strokeWidth="1.500" /><path d="M19 12H7M12 6l-6 6 6 6" stroke="#fff" strokeWidth="2.500" /></Svg>
      </SideButton>
      <button type="button" aria-label="More" className="mt-auto mb-0.5"><DoubleChevron down /></button>
    </div>
  );
}

function DocumentTabs() {
  const tabs = [
    { label: "MUX8TO1.v", icon: <PageText /> },
    { label: "Design Summary (out of date)", icon: <Sigma s={16} /> },
    { label: "TEST.v", icon: <PageText /> },
    { label: "MUX8TO1 (RTL1)", icon: <Schematic />, active: true },
  ];
  return (
    <div role="tablist" aria-label="Open documents" className="flex h-6 items-start border-t-2 border-[#9a9aa0] pl-px">
      {tabs.map((t) => (
        <div
          key={t.label}
          className={`flex w-[217px] items-center pr-1.5 pl-1 ${t.active ? "h-[22px] rounded-b border-x border-b-[3px] border-x-[#9a9a9a] border-b-[#2288e6] bg-linear-to-b from-white to-[#f0f0f0] pr-[13px]" : "h-5 rounded-b border-r-2 border-b border-[#97979c] bg-linear-to-b from-[#c9c9c9] to-[#eeeeee] to-60%"}`}
        >
          {t.icon}
          <button type="button" role="tab" aria-selected={!!t.active} className="flex-1">{t.label}</button>
          <button type="button" aria-label={`Close ${t.label}`} className={`flex h-[14px] w-[14px] items-center justify-center rounded-sm border ${t.active ? "border-[#b8371f] bg-[#e0583b]" : "border-[#959595] bg-[#bcbcbc]"}`}>
            <Svg s={8} vb="0 0 8 8"><path d="m1 1 6 6M7 1 1 7" stroke="#fff" strokeWidth="2" /></Svg>
          </button>
        </div>
      ))}
    </div>
  );
}

/* ---------- bottom dock ---------- */

function ObjectList({ title, color, selected }: { title: string; color: string; selected?: boolean }) {
  return (
    <section className="flex h-[72px] flex-1 flex-col border border-[#8a8a94] bg-white">
      <div className="flex h-[22px] items-start justify-between border-b border-[#d5d5d5] bg-linear-to-b from-white from-45% to-[#f1f2f4] pr-3 pl-1">
        <h3 className="leading-[23px]">{title}</h3>
        <span className="mt-1.5"><Svg w={9} h={5} vb="0 0 9 5"><path d="M0 5h9L4.500 0z" fill="#9b9b9b" /></Svg></span>
      </div>
      <div className="flex h-[18px] items-center pl-1.5">
        <Expander />
        <Dots className="w-[5px]" />
        <span className={`flex h-[17px] flex-1 items-center gap-[6px] pl-[3px] ${selected ? "bg-[#f0f0f0]" : ""}`}>
          <Blocks c={color} />
          MUX8TO1
        </span>
      </div>
    </section>
  );
}

const PANEL_TITLE = "h-[22px] text-center font-['Noto_Sans',sans-serif] text-[11px] font-bold leading-[18px]";

function CategoryPanel() {
  const rows = [
    ["Type", "MUX8TO1:1"],
    ["Part", "xc3sd1800a-4-fg676"],
    ["OriginalSymbol", "MUX8TO1"],
  ];
  return (
    <section>
      <div className="flex h-[18px] items-center justify-between border border-[#a9a9a9] pr-0.5 pl-0.5">
        <h2>View by Category</h2>
        <DockButtons />
      </div>
      <div className="flex px-1 text-[12px]">
        <div className="min-w-0 flex-1">
          <h3 className={PANEL_TITLE}>Design Objects of Top Level Block</h3>
          <div className="flex gap-1.5">
            <ObjectList title="Instances" color="#7f6a9c" selected />
            <ObjectList title="Pins" color="#d81f28" />
            <ObjectList title="Signals" color="#d81f28" />
          </div>
        </div>
        <div className="flex w-[13px] items-end justify-center">
          <span className="h-[72px] w-1 bg-[radial-gradient(circle,#c2c2c2_1px,transparent_2px)] bg-[length:4px_5px]" />
        </div>
        <div className="min-w-0 flex-1">
          <h3 className={PANEL_TITLE}>Properties of Instance: MUX8TO1</h3>
          <div className="flex h-[72px] overflow-hidden border border-[#8a8a94] bg-white">
            <table className="flex-1 table-fixed border-collapse self-start text-left">
              <thead>
                <tr className="h-[23px] border-b border-[#d5d5d5] bg-linear-to-b from-white from-45% to-[#f1f2f4]">
                  <th className="w-1/2 border-r border-[#dedede] px-1 font-normal">
                    <span className="flex items-start justify-between pr-1">
                      Name
                      <Svg w={9} h={5} vb="0 0 9 5"><path d="M0 0h9L4.500 5z" fill="#9b9b9b" /></Svg>
                    </span>
                  </th>
                  <th className="w-1/2 px-1 font-normal">Value</th>
                </tr>
              </thead>
              <tbody>
                {rows.map(([n, v], i) => (
                  <tr key={n} className={i === 1 ? "bg-[#e8e8e8]" : ""}>
                    <td className="h-4 px-1 leading-4">{n}</td>
                    <td className="h-4 px-1 leading-4">{v}</td>
                  </tr>
                ))}
              </tbody>
            </table>
            <div className="flex w-4 shrink-0 flex-col items-center justify-between bg-[#f0f0f0] py-1.5">
              <Arrow up />
              <span className="mb-5 h-3 w-3.5 rounded-sm border border-[#999] bg-[#e2e2e2]" />
              <Arrow />
            </div>
          </div>
        </div>
      </div>
    </section>
  );
}

/* ---------- Windows taskbar ---------- */

function TaskButton({ label, open, children }: { label: string; open?: boolean; children: ReactNode }) {
  return (
    <button type="button" aria-label={label} title={label} className={`flex h-[37px] w-[58px] items-center justify-center ${open ? "rounded-sm border border-[#a9dcf0] bg-linear-to-b from-[#8cc6e2] to-[#4aa5d3]" : ""}`}>
      {children}
    </button>
  );
}

function Taskbar() {
  return (
    <footer className="flex h-[39px] items-center border-t-2 border-[#2d4a66] bg-[linear-gradient(105deg,#1e5f96_0%,#2a7fb4_8%,#318fd0_20%,#3590cf_45%,#2d84ca_60%,#3f97da_66%,#1f6dbb_71%,#1c64ad_84%,#173f72_90%,#123764_100%)]">
      <button type="button" aria-label="Start" className="flex w-[54px] justify-center">
        <Svg s={36} vb="0 0 36 36">
          <circle cx="18" cy="18" r="17" fill="url(#gOrb)" stroke="#17466e" strokeWidth="1.500" />
          <path d="M9.500 9.500c3-1.500 5.500-1.500 8.500 0l-1.500 7.500c-3-1.500-5.500-1.500-8.500 0z" fill="#ee6a2c" />
          <path d="M19.500 10c3 1.500 5.500 1.500 8.500 0L26.500 17.500c-3 1.500-5.500 1.500-8.500 0z" fill="#8cc63e" />
          <path d="M7.700 18.500c3-1.500 5.500-1.500 8.500 0L14.700 26c-3-1.500-5.500-1.500-8.500 0z" fill="#4aa3ea" />
          <path d="M17.700 19c3 1.500 5.500 1.500 8.500 0L24.700 26.500c-3 1.500-5.500 1.500-8.500 0z" fill="#fbd13a" />
        </Svg>
      </button>
      <div className="ml-1.5 flex flex-1 gap-1">
        <TaskButton label="Internet Explorer">
          <Svg s={32} vb="0 0 32 32">
            <path d="M28 18H12c0 3.500 2.500 5.500 5.500 5.500 2 0 3.500-.8 4.500-2.500h5.500C26 26 22 29 17.500 29 11 29 5.500 24.500 5.500 17.500S11 5.500 17.500 5.500 28.500 10.500 28 18zM12.500 14h9.500c-.3-2.800-2-4.300-4.700-4.300S12.800 11.200 12.500 14z" fill="url(#gIe)" stroke="#0a3f8a" strokeWidth="1" />
            <path d="M4 30C-1 26 10 8 23 3c6-2.500 9-.5 6 6" stroke="#f6c728" strokeWidth="2.500" />
          </Svg>
        </TaskButton>
        <TaskButton label="Windows Explorer" open>
          <Svg s={34} vb="0 0 34 34">
            <path d="M3 5h10l2 2h16v23H3z" fill="#e8c95c" stroke="#a88830" />
            <path d="M3 10h29v19H3z" fill="#fbeaa0" stroke="#c8a540" />
            <path d="M6 6h4M13 8h4M21 9h5" stroke="#d04a28" strokeWidth="2" />
            <path d="M7 31v-8c0-2 1-3 3-3h17c2 0 3 1 3 3v8h-5v-6H12v6z" fill="#8fd0f0" stroke="#4f97c6" />
          </Svg>
        </TaskButton>
        <TaskButton label="Windows Media Player">
          <Svg s={32} vb="0 0 32 32">
            <path d="M5 4h18v24H5zM23 6h3v21h-3zM26 8h2v18h-2z" fill="#a9d8f0" stroke="#5f9cbe" />
            <circle cx="14" cy="16" r="9" fill="#f37a1e" stroke="#fff" strokeWidth="1.500" />
            <path d="m11 10.500 8 5.500-8 5.500z" fill="#fff" />
          </Svg>
        </TaskButton>
        <TaskButton label="Firefox" open>
          <Svg s={34} vb="0 0 34 34">
            <circle cx="17" cy="16" r="13" fill="#2a5ea8" />
            <path d="M18 4c4 2 4 6 2 8l5 3-6 5c-4 1-6-3-4-6-2-1-6 0-6 3" fill="#152f66" />
            <path d="M3 8c1 2 2 2 4 1 2-2 4-2 6-1-2 1-3 3-2 5l3 1-3 3c0 5 5 8 10 5 4-2 5-7 3-11 2 1 3 2 3 3 1-4-1-7-4-9 5 2 9 7 9 12 0 9-7 15-15 15S2 26 2 18c0-4 0-7 1-10z" fill="url(#gFox)" />
          </Svg>
        </TaskButton>
        <TaskButton label="ISE Project Navigator" open><Svg s={32} vb="0 0 32 32"><path d="M1 2h20l10 14H12z" fill="#d9dd4e" /><path d="M12 16h19L21 30H1z" fill="#8b8c0c" /></Svg></TaskButton>
        <TaskButton label="ISim" open>
          <Svg s={34} vb="0 0 34 34">
            <path d="M2 1h30v32H2z" fill="#b9d2ee" />
            <path d="M3 13h7V5h10v8h6V6h5M3 19h10" stroke="#4d7fb9" strokeWidth="1.800" />
            <path d="M2 25h22v8H2z" fill="#eef4fa" />
            <circle cx="25" cy="20" r="6" fill="#dfe3e6" stroke="#4c5459" strokeWidth="2" />
            <circle cx="25" cy="20" r="2" fill="#4c5459" />
            <path d="M25 14v12M19 20h12M21 16l8 8M29 16l-8 8" stroke="#4c5459" />
            <text x="3" y="32" fontSize="9" fontWeight="700" fontFamily="Liberation Sans, sans-serif" fill="#0b1a33">ISim</text>
          </Svg>
        </TaskButton>
      </div>
      <div className="flex items-center gap-2">
        <button type="button" aria-label="Show hidden icons" className="flex w-4 justify-center">
          <Svg w={7} h={4} vb="0 0 7 4"><path d="M0 4h7L3.500 0z" fill="#fff" /></Svg>
        </button>
        <button type="button" aria-label="Volume">
          <Svg s={16} vb="0 0 16 16"><path d="M1 5h3l4-4v13l-4-4H1z" fill="#fff" /><circle cx="11" cy="11" r="4" fill="#fff" stroke="#d22" strokeWidth="1.800" /><path d="m8.500 8.500 5 5" stroke="#d22" strokeWidth="1.500" /></Svg>
        </button>
        <button type="button" aria-label="Network">
          <Svg s={16} vb="0 0 16 16"><path d="M5.500 4.500h10v7h-10zM8 14.500h6M10.500 12v2M1.500 1v3h3V1M3 4v8h2" stroke="#fff" strokeWidth="1.400" /></Svg>
        </button>
        <button type="button" aria-label="Action Center">
          <Svg s={16} vb="0 0 16 16"><path d="M1.500 1v14" stroke="#fff" strokeWidth="1.800" /><path d="M3 2c3-2 5 2 10 0v7c-5 2-7-2-10 0z" fill="#fff" /><circle cx="11" cy="11" r="4.500" fill="#d32626" /><path d="m9 9 4 4M13 9l-4 4" stroke="#fff" strokeWidth="1.500" /></Svg>
        </button>
        <time dateTime="2017-01-30T11:07" className="w-[68px] text-center text-[12px] leading-[17px] text-white">
          11:07 AM
          <br />
          1/30/2017
        </time>
      </div>
      <button type="button" aria-label="Show desktop" className="ml-[3px] h-full w-[13px] border-l border-[#5f80a5] bg-linear-to-b from-[#7b98b6] to-[#1d4470]" />
    </footer>
  );
}

export default function App() {
  return (
    <div className={`${UI} flex min-h-screen flex-col bg-[#f0f0f0] text-[11px] leading-4 text-black`}>
      <Defs />
      <TitleBar />
      <MenuBar />
      <MainToolbar />
      <main className="flex flex-1 flex-col">
        <div className="flex flex-1">
          <aside className="flex w-[277px] shrink-0 flex-col">
            <DesignPanel />
            <TabStrip
              label="Panels"
              tabs={[
                { label: "Start", icon: <Chevron s={16} />, width: "w-[63px] pr-1.5" },
                {
                  label: "Design",
                  icon: <Svg s={18} vb="0 0 16 16"><path d="M.5 3.500h6v7h-6zM2 5.500h3M2 8h3" fill="#e4efff" stroke="#24508f" /><path d="M7 7h3M10 3v9M10 3h3M10 12h3" stroke="#24508f" /><circle cx="13" cy="3" r="2" fill="#6a9b3a" /><circle cx="12" cy="7.500" r="1.800" fill="#8c5cb8" /><circle cx="13.500" cy="12.500" r="2" fill="#4068b0" /></Svg>,
                  active: true,
                  width: "w-[77px] pr-2.5",
                },
                { label: "Files", icon: <FilesIcon />, width: "w-[61px] pr-2" },
                { label: "Libraries", icon: <FilesIcon front="#ffe14d" />, width: "w-[72px] pr-0.5" },
              ]}
            />
          </aside>
          <span className="mt-40 h-[88px] w-1 shrink-0 bg-[radial-gradient(circle,#bbb_1px,transparent_2px)] bg-[length:4px_5px]" />
          <section className="flex min-w-0 flex-1 flex-col">
            <div className="flex flex-1">
              <RtlToolbar />
              <SchematicCanvas />
              <div className="flex w-[17px] shrink-0 flex-col items-center bg-[#efefef] py-1.5">
                <Arrow up />
                <span className="mt-10 mb-auto flex h-[338px] w-[15px] items-center justify-center rounded-sm border border-[#979797] bg-linear-to-r from-[#f4f4f4] to-[#cfcfcf]">
                  <Svg w={7} h={8} vb="0 0 7 8"><path d="M0 1h7M0 4h7M0 7h7" stroke="#555" /></Svg>
                </span>
                <Arrow />
              </div>
            </div>
            <DocumentTabs />
          </section>
        </div>
        <div className="flex h-[7px] justify-center">
          <span className="h-1 w-[455px] bg-[radial-gradient(circle,#c2c2c2_1px,transparent_2px)] bg-[length:5px_4px]" />
        </div>
        <CategoryPanel />
        <div className="mt-1">
          <TabStrip
            label="Output panels"
            tabs={[
              { label: "Errors", icon: <Svg s={16} vb="0 0 16 16"><circle cx="8" cy="8" r="7.500" fill="#d8221a" stroke="#96100a" /><path d="m5.500 5.500 5 5M10.500 5.500l-5 5" stroke="#fff" strokeWidth="2" /></Svg>, width: "w-[70px] pr-2" },
              { label: "Warnings", icon: <Svg s={16} vb="0 0 16 16"><path d="M8 1 15.500 15H.5z" fill="#fbd52c" stroke="#b08600" /><path d="M8 5v5M8 11.500v2" stroke="#000" strokeWidth="1.800" /></Svg>, width: "w-[87px] pr-2" },
              { label: "Find in Files Results", icon: <Svg s={16} vb="0 0 16 16"><path d="M1 2h5l1 2h7v10H1z" fill="#f6e25c" stroke="#a88a10" /><path d="M5 6h2.500v3h2V6H12l2.500 8h-4v-3H7v3H3z" fill="#333" /></Svg>, width: "w-[133px] pr-1.5" },
              { label: "View by Category", icon: <Svg s={16} vb="0 0 16 16"><path d="M1 2h14v12H1z" fill="#eaf3ff" /><path d="M1 2.500h14M1 5.500h14M1 8.500h14M1 11.500h14M1 13.500h14M1.500 2v12M4.500 2v12M8.500 2v12M11.500 2v12M14.500 2v12" stroke="#5b93d0" /></Svg>, active: true, width: "w-[129px] pr-2 pl-[7px]" },
            ]}
          />
        </div>
        <p role="status" className="h-[21px] pr-1 text-right text-[12px] leading-[22px]">[92,400]</p>
      </main>
      <Taskbar />
    </div>
  );
}
